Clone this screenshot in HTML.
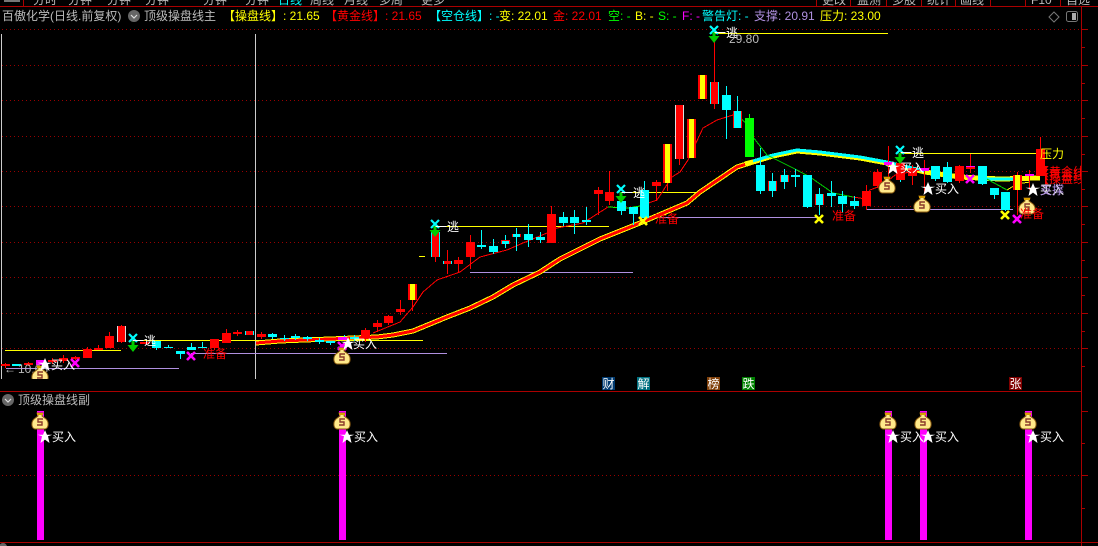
<!DOCTYPE html>
<html><head><meta charset="utf-8"><style>
html,body{margin:0;padding:0;background:#000;width:1098px;height:546px;overflow:hidden}
svg{display:block}
text{font-family:"Liberation Sans","WenQuanYi Zen Hei","Noto Sans CJK SC",sans-serif;font-size:12px}
.c{shape-rendering:crispEdges}
</style></head><body>
<svg width="1098" height="546" viewBox="0 0 1098 546" xmlns="http://www.w3.org/2000/svg">
<defs>
<g id="bag"><path d="M-3-8h6l-1 3 4 3c3 3 3 9-1 10h-10c-4-1-4-7-1-10l4-3z" fill="#ffe98a" stroke="#8a5a10" stroke-width="1"/><rect x="-3" y="-8" width="6" height="2" fill="#d9a000"/><path d="M3-2h-5v3h4v3h-5" fill="none" stroke="#8a3a2a" stroke-width="1.4"/></g>
<path id="star" d="M0-7 2-2.2H7.4L3-.8 4.5 6 0 2.6-4.5 6-3-.8-7.4-2.2H-2z" fill="#fff"/>
<path id="xc" d="M-4-4 4 4M4-4-4 4" fill="none" stroke="#0ff" stroke-width="2.2"/>
<path id="xy" d="M-4-4 4 4M4-4-4 4" fill="none" stroke="#ff0" stroke-width="2.6"/>
<path id="xm" d="M-4-4 4 4M4-4-4 4" fill="none" stroke="#f0f" stroke-width="2.6"/>
<path id="ar" d="M-1.5-5h3v4h4L0 6-5.500-1h4z" fill="#0c0"/>
<clipPath id="tb"><rect x="0" y="0" width="1098" height="6"/></clipPath>
<clipPath id="m"><rect x="0" y="30" width="1081" height="349"/></clipPath>
</defs>

<!-- top toolbar -->
<g class="c" fill="#a00">
<rect x="0" y="6" width="1098" height="1"/>
<rect x="23" y="0" width="1" height="6"/>
<rect x="816" y="0" width="1" height="6"/><rect x="850" y="0" width="1" height="6"/><rect x="886" y="0" width="1" height="6"/><rect x="921" y="0" width="1" height="6"/><rect x="955" y="0" width="1" height="6"/><rect x="990" y="0" width="1" height="6"/><rect x="1025" y="0" width="1" height="6"/><rect x="1060" y="0" width="1" height="6"/>
<rect x="1081" y="6" width="1" height="540"/>
<rect x="0" y="391" width="1081" height="1"/>
<rect x="0" y="542" width="1098" height="1"/>
</g>
<rect x="4" y="0" width="16" height="2" fill="#777"/>
<g clip-path="url(#tb)" fill="#bbb">
<text x="33" y="4">分时</text><text x="68" y="4">分钟</text><text x="107" y="4">分钟</text><text x="145" y="4">分钟</text><text x="203" y="4">分钟</text><text x="245" y="4">分钟</text><text x="278" y="4" fill="#0ff">日线</text><text x="310" y="4">周线</text><text x="344" y="4">月线</text><text x="379" y="4">多周</text><text x="421" y="4">更多</text>
<text x="822" y="4">更改</text><text x="857" y="4">监测</text><text x="892" y="4">多股</text><text x="927" y="4">统计</text><text x="960" y="4">画线</text><text x="1031" y="4">F10</text><text x="1066" y="4">自选</text>
</g>

<!-- title row -->
<text x="2" y="20" fill="#bbb">百傲化学(日线.前复权)</text>
<circle cx="134" cy="16" r="6" fill="#666"/><path d="M131 15l3 3 3-3" fill="none" stroke="#ddd" stroke-width="1.2"/>
<text x="144" y="20" fill="#bbb">顶级操盘线主</text>
<text x="223" y="20" fill="#ff0">【操盘线】: 21.65</text>
<text x="325" y="20" fill="#f00">【黄金线】: 21.65</text>
<text x="429" y="20" fill="#0ff">【空仓线】: -</text>
<text x="499" y="20" fill="#ff0">变: 22.01</text>
<text x="553" y="20" fill="#f00">金: 22.01</text>
<text x="608" y="20" fill="#0f0">空: -</text>
<text x="635" y="20" fill="#ff0">B: -</text>
<text x="658" y="20" fill="#0f0">S: -</text>
<text x="682" y="20" fill="#f0f">F: -</text>
<text x="702" y="20" fill="#0ff">警告灯: -</text>
<text x="754" y="20" fill="#b090e0">支撑: 20.91</text>
<text x="820" y="20" fill="#ff0">压力: 23.00</text>
<path d="M1054 12l5 5-5 5-5-5z" fill="none" stroke="#777"/>
<rect x="1066.500" y="11.500" width="11" height="10" rx="2" fill="none" stroke="#777"/><rect x="1072" y="13" width="4" height="7" fill="#aaa"/>

<!-- grid -->
<g stroke="#900" stroke-width="1" stroke-dasharray="1 3" class="c">
<path d="M2 29.500H1080M2 65.500H1080M2 100.500H1080M2 136.500H1080M2 171.500H1080M2 206.500H1080M2 242.500H1080M2 277.500H1080M2 313.500H1080M2 348.500H1080M2 475.500H1080"/>
</g>
<g class="c" stroke="#a00"><path d="M1082 29.500h6M1082 47.500h3M1082 65.500h6M1082 83.500h3M1082 100.500h6M1082 118.500h3M1082 136.500h6M1082 154.500h3M1082 171.500h6M1082 189.500h3M1082 206.500h6M1082 224.500h3M1082 242.500h6M1082 260.500h3M1082 277.500h6M1082 295.500h3M1082 313.500h6M1082 331.500h3M1082 348.500h6M1082 366.500h3M1082 411.500h6M1082 443.500h3M1082 475.500h6M1082 508.500h3"/></g>
<path class="c" d="M1.500 34V379M255.500 34V379" stroke="#ccc"/>

<!-- horizontal lines -->
<g class="c" stroke-width="1">
<path stroke="#ff0" d="M5 350.500H121M133 340.500H423M435 226.500H609M621 192.500H700M714 33.500H888M900 153.500H1040"/>
<path stroke="#b090e0" d="M6 368.500H179M191 353.500H447M470 272.500H633M644 217.500H819M866 209.500H1013"/>
</g>

<!-- thick band -->
<g class="c" fill="none">
<polyline points="256,343 280,341 330,339 377,337 393,335 413,331 447,317 470,308 493,297 513,285 540,272 560,259 600,239 640,223 687,203 700,192 737,167 753,162" stroke="#ff0" stroke-width="5"/>
<polyline points="256,343 280,341 330,339 377,337 393,335 413,331 447,317 470,308 493,297 513,285 540,272 560,259 600,239 640,223 687,203 700,192 737,167 753,162" stroke="#f00" stroke-width="3"/>
<polyline points="745,164 753,162 773,156 797,151 820,153 860,158 887,163 925,172 960,177 1000,179 1040,178" stroke="#ff0" stroke-width="5"/>
<polyline points="753,161 773,155 797,150 820,152 860,157 887,162 925,171" stroke="#0ff" stroke-width="3"/>
<polyline points="985,179 1015,179" stroke="#0ff" stroke-width="3"/>
</g>

<!-- thin lines -->
<g class="c" fill="none">
<polyline points="373,333 400,322 413,307 423,292 437,280 460,272 480,257 507,250 523,243 547,233 557,228 583,223 608,207" stroke="#f00"/>
<polyline points="608,207 628,208 640,206" stroke="#0f0"/>
<polyline points="640,206 657,200 672,177 680,172 688,160 703,128 717,120 733,115" stroke="#f00"/>
<polyline points="737,115 748,125 753,137 767,155 793,168 810,177 833,193 853,197" stroke="#0c0"/>
<polyline points="853,197 866,199 870,190 883,185 895,175 930,168" stroke="#f00"/>
<polyline points="985,178 1007,190" stroke="#0c0"/>
<polyline points="1007,190 1017,184 1030,182" stroke="#ff0"/>
</g>

<!-- candles -->
<g class="c">
<path fill="none" stroke="#f00" d="M121.500 325V343M109.500 332V348M98.500 345V350M87.500 347V358M75.500 356V360M63.500 355V363M52.500 358V364M28.500 362V366M5.500 363V368M226.500 329V343M214.500 339V350M237.500 330V336M261.500 332V339M365.500 328V342M377.500 320V332M388.500 315V325M400.500 300V315M412.500 300V311M435.500 257V262M447.500 250V274M458.500 257V272M470.500 235V269M551.500 206V214M598.500 187V215M609.500 171V205M656.500 180V201M667.500 183V191M679.500 159V165M714.500 42V109M866.500 185V210M877.500 169V188M888.500 146V180M912.500 165V185M924.500 160V193M959.500 165V183M970.500 154V173M1017.500 172V215M1029.500 170V190M1040.500 137V149"/>
<path fill="none" stroke="#0ff" d="M156.500 341V350M168.500 345V348M180.500 351V359M191.500 343V350M202.500 342V348M272.500 333V339M284.500 335V341M295.500 334V340M307.500 336V341M319.500 338V344M330.500 341V345M344.500 335V339M354.500 335V341M481.500 230V249M493.500 239V254M505.500 235V248M516.500 228V251M528.500 224V247M540.500 232V243M563.500 212V226M574.500 210V234M586.500 207V225M621.500 201V215M633.500 207V225M644.500 181V220M726.500 86V139M737.500 96V128M760.500 148V194M772.500 173V197M784.500 169V189M795.500 169V187M807.500 175V208M819.500 188V215M831.500 181V207M842.500 191V213M854.500 196V209M935.500 166V181M947.500 162V183M982.500 166V185M994.500 188V199M1005.500 192V211M900.500 155V182"/>
<path fill="#0ff" d="M431 232h9v25h-9zM443 261h9v3h-9zM710 82h9v22h-9zM12 364h9v2h-9zM245 331h9v4h-9z"/>
<path fill="#ddd" d="M117 326h9v16h-9zM675 105h9v54h-9z"/>
<path fill="#f00" d="M501 240h9v4h-9zM512 234h9v3h-9zM733 111h9v17h-9zM768 181h9v10h-9zM780 175h9v7h-9zM815 194h9v11h-9z"/>
<path fill="#0ff" d="M152 341h9v7h-9zM164 347h9v1h-9zM176 351h9v3h-9zM187 347h9v3h-9zM198 347h9v1h-9zM268 334h9v3h-9zM280 338h9v1h-9zM291 336h9v2h-9zM303 337h9v2h-9zM315 340h9v2h-9zM326 341h9v2h-9zM350 337h9v2h-9zM477 245h9v2h-9zM489 246h9v6h-9zM502 241h7v3h-7zM513 234h7v3h-7zM524 234h9v6h-9zM536 237h9v3h-9zM559 217h9v6h-9zM570 217h9v6h-9zM582 220h9v2h-9zM617 201h9v10h-9zM629 207h9v7h-9zM640 190h9v28h-9zM722 95h9v15h-9zM734 111h7v17h-7zM756 165h9v26h-9zM769 181h7v10h-7zM781 175h7v7h-7zM791 175h9v2h-9zM803 175h9v32h-9zM816 194h7v11h-7zM827 193h9v3h-9zM838 196h9v8h-9zM850 201h9v5h-9zM931 166h9v13h-9zM943 167h9v15h-9zM978 166h9v18h-9zM990 188h9v7h-9zM1001 192h9v18h-9z"/>
<path fill="#f00" d="M1 364h9v2h-9zM24 363h9v2h-9zM48 360h9v2h-9zM59 358h9v3h-9zM71 357h9v2h-9zM83 349h9v9h-9zM94 348h9v2h-9zM105 336h9v12h-9zM118 326h7v16h-7zM140 342h9v2h-9zM210 339h9v9h-9zM222 333h9v10h-9zM233 332h9v2h-9zM246 331h7v4h-7zM257 334h9v3h-9zM361 330h9v9h-9zM373 323h9v4h-9zM384 316h9v7h-9zM396 309h9v3h-9zM408 284h9v16h-9zM432 232h7v25h-7zM444 261h7v3h-7zM454 260h9v4h-9zM466 242h9v15h-9zM547 214h9v29h-9zM594 190h9v4h-9zM605 192h9v9h-9zM652 182h9v4h-9zM663 144h9v39h-9zM676 105h7v54h-7zM687 119h9v39h-9zM698 75h9v24h-9zM711 82h7v22h-7zM862 191h9v15h-9zM873 172h9v14h-9zM896 163h9v17h-9zM908 168h9v8h-9zM955 166h9v15h-9zM966 166h9v3h-9zM1013 175h9v15h-9zM1036 149h9v27h-9z"/>
<path fill="#ff0" d="M410 284h5v16h-5zM665 144h5v39h-5zM689 119h5v39h-5zM700 75h5v24h-5zM1015 175h5v15h-5zM419 256h6v1h-6z"/>
<path fill="#0f0" d="M745 118h9v39h-9z"/><path stroke="#0f0" d="M749.500 114V118"/>
<path fill="#f0f" d="M36 360h9v5h-9zM884 162h9v3h-9zM920 168h9v3h-9zM966 166h9v1h-9zM1025 174h9v2h-9zM338 337h9v3h-9z"/>
</g>

<!-- markers -->
<use href="#xm" x="75" y="363"/><use href="#xm" x="191" y="356"/><use href="#xm" x="342" y="346"/><use href="#xm" x="342" y="351"/>
<use href="#xm" x="970" y="179"/><use href="#xy" x="643" y="221"/><use href="#xy" x="819" y="219"/><use href="#xy" x="1005" y="215"/><use href="#xm" x="1017" y="219"/>
<use href="#xc" x="133" y="338"/><use href="#ar" x="133" y="346"/>
<use href="#xc" x="435" y="224"/><use href="#ar" x="435" y="231"/>
<use href="#xc" x="621" y="189"/><use href="#ar" x="621" y="197"/>
<use href="#xc" x="714" y="30"/><use href="#ar" x="714" y="37"/>
<use href="#xc" x="900" y="150"/><use href="#ar" x="900" y="158"/>

<g fill="#fff">
<text x="132" y="345">一逃</text><text x="435" y="231">一逃</text><text x="621" y="197">一逃</text><text x="714" y="37">一逃</text><text x="900" y="157">一逃</text>
</g>
<text x="729" y="43" fill="#bbb">29.80</text>
<text x="4" y="373" fill="#bbb">←</text><text x="18" y="373" fill="#bbb">10.68</text>

<!-- buy labels main -->
<g clip-path="url(#m)"><use href="#bag" x="40" y="374"/></g>
<use href="#bag" x="342" y="356"/><use href="#bag" x="887" y="185"/><use href="#bag" x="922" y="204"/><use href="#bag" x="1027" y="206"/>
<use href="#star" x="45" y="365"/><text x="51" y="369" fill="#fff">买入</text>
<use href="#star" x="348" y="344"/><text x="353" y="348" fill="#fff">买入</text>
<use href="#star" x="893" y="168"/><text x="900" y="172" fill="#fff">买入</text>
<use href="#star" x="928" y="189"/><text x="935" y="193" fill="#fff">买入</text>
<use href="#star" x="1033" y="190"/><text x="1040" y="194" fill="#fff">买入</text><text x="1040" y="194" fill="#b090e0">支撑</text>
<g fill="#f00"><text x="203" y="358">准备</text><text x="655" y="223">准备</text><text x="832" y="220">准备</text><text x="1020" y="218">准备</text></g>
<clipPath id="rt"><rect x="1030" y="160" width="51" height="30"/></clipPath>
<g fill="#f00" clip-path="url(#rt)"><text x="1037" y="176">【黄金线</text><text x="1037" y="183">【操盘线</text><text x="1037" y="179">【黄金线</text></g>
<text x="1040" y="158" fill="#ff0">压力</text>

<!-- tags -->
<g class="c"><path fill="#003a70" d="M602 377h13v13h-13z"/><path fill="#007080" d="M637 377h13v13h-13z"/><path fill="#80400a" d="M707 377h13v13h-13z"/><path fill="#008000" d="M742 377h13v13h-13z"/><path fill="#800000" d="M1009 377h13v13h-13z"/></g>
<g fill="#fff"><text x="602.500" y="388">财</text><text x="637.500" y="388">解</text><text x="707.500" y="388">榜</text><text x="742.500" y="388">跌</text><text x="1009.500" y="388">张</text></g>

<!-- sub pane -->
<circle cx="8" cy="400" r="6" fill="#666"/><path d="M5 399l3 3 3-3" fill="none" stroke="#ddd" stroke-width="1.2"/>
<text x="18" y="404" fill="#bbb">顶级操盘线副</text>
<g class="c" fill="#f0f"><rect x="37" y="411" width="7" height="129"/><rect x="339" y="411" width="7" height="129"/><rect x="885" y="411" width="7" height="129"/><rect x="920" y="411" width="7" height="129"/><rect x="1025" y="411" width="7" height="129"/></g>
<use href="#bag" x="40" y="421"/><use href="#bag" x="342" y="421"/><use href="#bag" x="888" y="421"/><use href="#bag" x="923" y="421"/><use href="#bag" x="1028" y="421"/>
<g fill="#fff">
<use href="#star" x="45" y="437"/><text x="52" y="441">买入</text>
<use href="#star" x="347" y="437"/><text x="354" y="441">买入</text>
<use href="#star" x="893" y="437"/><text x="900" y="441">买入</text>
<use href="#star" x="928" y="437"/><text x="935" y="441">买入</text>
<use href="#star" x="1033" y="437"/><text x="1040" y="441">买入</text>
</g>
<circle cx="3" cy="547" r="4" fill="#666"/>
</svg>
</body></html>
